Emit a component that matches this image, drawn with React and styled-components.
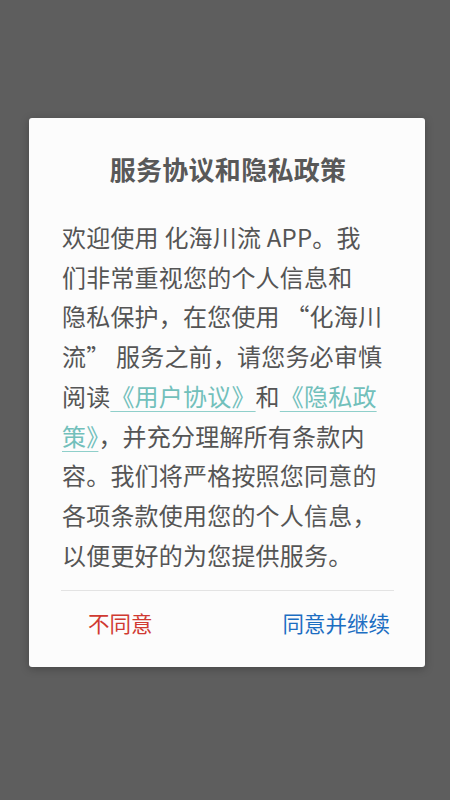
import React from "react";
import styled, { createGlobalStyle } from "styled-components";

const GlobalStyle = createGlobalStyle`
  html, body {
    margin: 0;
    padding: 0;
    background: #5e5e5e;
  }
  body {
    font-family: "Noto Sans CJK SC", "Noto Sans", sans-serif;
  }
`;

const Screen = styled.div`
  width: 450px;
  height: 800px;
  background: #5e5e5e;
  padding: 118px 0 0 29px;
  box-sizing: border-box;
  display: flex;
`;

const Dialog = styled.div`
  width: 396px;
  height: 549px;
  background: #fcfcfc;
  border-radius: 3px;
  box-shadow: 0 2px 8px rgba(0, 0, 0, 0.25);
  padding: 33px 31px 0 33px;
  box-sizing: border-box;
  display: flex;
  flex-direction: column;
`;

const Title = styled.h2`
  margin: 0;
  font-size: 26px;
  line-height: 36px;
  font-weight: 700;
  color: #585858;
  text-align: center;
  letter-spacing: 0.3px;
`;

const Body = styled.p`
  margin: 30px 0 0;
  font-size: 24px;
  line-height: 39.7px;
  color: #555555;
  white-space: nowrap;
  letter-spacing: 0.2px;
`;

const Link = styled.a`
  color: #72c0bb;
  text-decoration: underline;
  text-decoration-color: #8fcfca;
  text-decoration-thickness: 1px;
  text-underline-offset: 5px;
`;

const Divider = styled.div`
  height: 1px;
  background: #e3e3e3;
  margin: 16px 0 0 -1px;
`;

const Actions = styled.div`
  display: flex;
  justify-content: space-between;
  align-items: center;
  padding: 17px 4px 0 26px;
`;

const Action = styled.button`
  border: none;
  background: none;
  padding: 0;
  font-family: inherit;
  font-size: 21.5px;
  line-height: 30px;
  color: ${(props) => (props.primary ? "#1c6ec2" : "#d03a31")};
  cursor: pointer;
`;

const App = () => {
  return (
    <>
      <GlobalStyle />
      <Screen>
        <Dialog>
          <Title>服务协议和隐私政策</Title>
          <Body>
            欢迎使用 化海川流 APP。我
            <br />
            们非常重视您的个人信息和
            <br />
            隐私保护，在您使用 “化海川
            <br />
            流” 服务之前，请您务必审慎
            <br />
            阅读<Link>《用户协议》</Link>和<Link>《隐私政</Link>
            <br />
            <Link>策》</Link>，并充分理解所有条款内
            <br />
            容。我们将严格按照您同意的
            <br />
            各项条款使用您的个人信息，
            <br />
            以便更好的为您提供服务。
          </Body>
          <Divider />
          <Actions>
            <Action>不同意</Action>
            <Action primary>同意并继续</Action>
          </Actions>
        </Dialog>
      </Screen>
    </>
  );
};

export default App;
